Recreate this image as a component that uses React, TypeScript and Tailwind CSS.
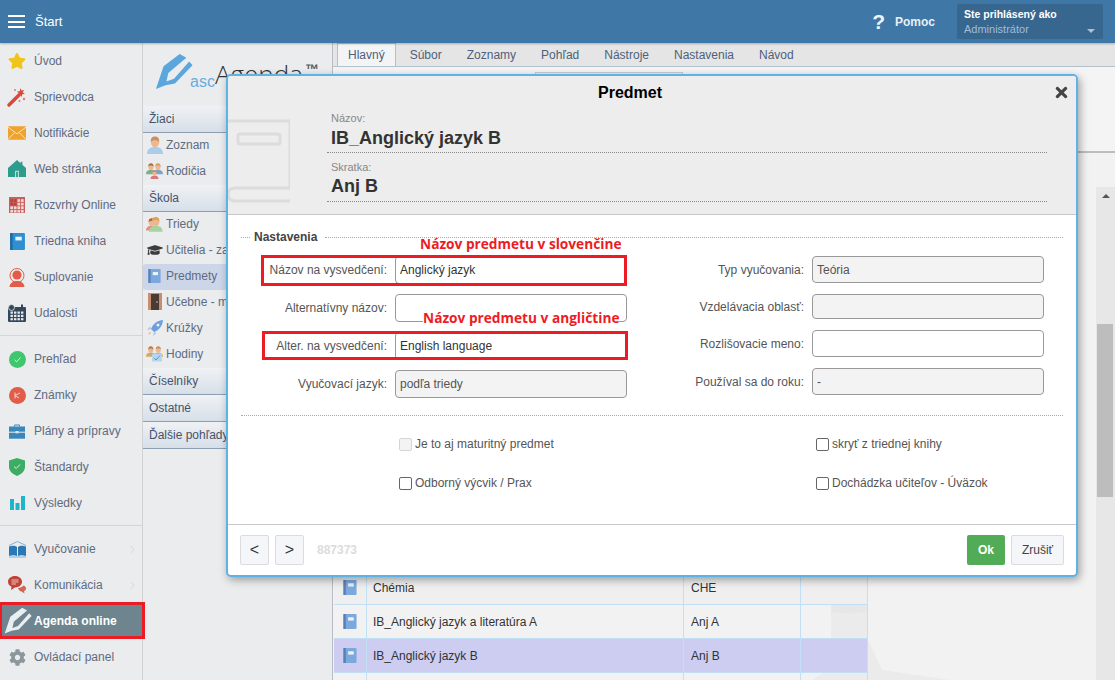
import type { ReactNode } from "react";
import { FaCog, FaGraduationCap, FaStar, FaTimes } from "react-icons/fa";
import { ChevronRight } from "lucide-react";

const Wand = () => (
  <svg width="20" height="20" viewBox="0 0 20 20">
    <path d="M2 18 L12 8" stroke="#d9483b" strokeWidth="3.4" strokeLinecap="round" />
    <path d="M13.5 1 l.9 2.6 2.6-.6-1.2 2.4 2.2 1.5-2.8.4-.5 2.7-1.7-2.2-2.6.8 1.3-2.4-1.8-1.9 2.7.2z" fill="#d9483b" />
    <circle cx="17" cy="12" r="1.2" fill="#e8766a" />
    <circle cx="12.5" cy="14" r="1" fill="#e8766a" />
    <circle cx="8" cy="3" r="1" fill="#e8766a" />
  </svg>
);

const Mail = () => (
  <svg width="18" height="14" viewBox="0 0 20 15">
    <rect width="20" height="15" fill="#f0a22e" />
    <path d="M0 1 L10 8.5 L20 1 M0 14.5 L7.5 7 M20 14.5 L12.5 7" stroke="#fbe3b8" strokeWidth="1.1" fill="none" />
  </svg>
);

const House = () => (
  <svg width="18" height="18" viewBox="0 0 20 20">
    <path d="M0 9 L10 0 L14 3.5 V2 H16 V5.3 L20 9 V19 H0Z" fill="#2c9c8c" />
    <rect x="8" y="12" width="4" height="7" fill="#d8efeb" />
    <rect x="9" y="13" width="2" height="6" fill="#2c9c8c" />
  </svg>
);

const RedCalendar = () => (
  <svg width="16" height="16" viewBox="0 0 18 18">
    <rect width="18" height="18" fill="#c7605c" />
    {[0, 1, 2, 3].map((r) =>
      [0, 1, 2, 3].map((c) => (
        <rect key={`${r}-${c}`} x={1.5 + c * 4} y={2.5 + r * 4} width="3" height="3" fill={c < 2 && r < 2 ? "#b8413c" : "#f2d6d4"} />
      ))
    )}
  </svg>
);

const BlueBook = ({ w = 14, h = 16, fill = "#2f8fd0", dark = "#1f6ea8" }: { w?: number; h?: number; fill?: string; dark?: string }) => (
  <svg width={w} height={h} viewBox="0 0 14 16">
    <rect width="14" height="16" rx="1" fill={fill} />
    <rect width="2.5" height="16" fill={dark} />
    <rect x="5" y="3.500" width="6" height="3.500" fill="#eaf3fa" />
  </svg>
);

const PersonCircle = () => (
  <svg width="18" height="19" viewBox="0 0 18 19">
    <circle cx="9" cy="7.5" r="7" fill="none" stroke="#e25c4a" strokeWidth="1" />
    <circle cx="9" cy="7" r="4.6" fill="#e25c4a" />
    <path d="M1.5 19 C2 14 6 13 9 13 C12 13 16 14 16.5 19Z" fill="#e25c4a" />
  </svg>
);

const DarkCalendar = () => (
  <svg width="18" height="18" viewBox="0 0 18 18">
    <rect y="3" width="18" height="15" rx="1" fill="#35475b" />
    <circle cx="3.5" cy="3.5" r="3" fill="#35475b" stroke="#eceded" strokeWidth=".8" />
    <rect x="13" y="0.5" width="2" height="4" fill="#35475b" />
    {[0, 1, 2].map((r) =>
      [0, 1, 2, 3].map((c) => (
        <rect key={`${r}-${c}`} x={2.5 + c * 3.5} y={7.5 + r * 3.3} width="2.4" height="2.2" fill="#e8ecf0" />
      ))
    )}
  </svg>
);

const CheckCircle = () => (
  <svg width="17" height="17" viewBox="0 0 17 17">
    <circle cx="8.5" cy="8.5" r="8.5" fill="#3ec76e" />
    <path d="M5.5 8.8 L7.6 10.8 L11.5 6.5" stroke="#d9f5e3" strokeWidth="1" fill="none" />
  </svg>
);

const GradeCircle = () => (
  <svg width="17" height="17" viewBox="0 0 17 17">
    <circle cx="8.5" cy="8.5" r="8.5" fill="#e25c4a" />
    <path d="M6 5.5 V11.5 M6 8.5 L11 6 M6 8.5 L10 11" stroke="#f8d5d0" strokeWidth="1" fill="none" />
  </svg>
);

const Briefcase = () => (
  <svg width="16" height="15" viewBox="0 0 16 15">
    <path d="M5.5 2.5 V1 H10.5 V2.5" stroke="#3a87bb" strokeWidth="1" fill="none" />
    <rect y="2.5" width="16" height="5.2" fill="#3a87bb" />
    <rect y="8.7" width="16" height="6" fill="#3a87bb" />
    <rect x="6.5" y="7" width="3" height="2.4" fill="#d5e6f1" />
  </svg>
);

const Shield = () => (
  <svg width="16" height="18" viewBox="0 0 16 18">
    <path d="M8 0 L16 2.5 V9 C16 13.5 11.5 16.5 8 18 C4.500 16.5 0 13.500 0 9 V2.500Z" fill="#3cad63" />
    <path d="M5 8.500 L7.200 10.500 L11 6.500" stroke="#d9f1e1" strokeWidth="1" fill="none" />
  </svg>
);

const Bars = () => (
  <svg width="15" height="14" viewBox="0 0 15 14">
    <rect y="3" width="4" height="11" fill="#1fb5c9" />
    <rect x="5.500" y="7" width="4" height="7" fill="#1fb5c9" />
    <rect x="11" width="4" height="14" fill="#1fb5c9" />
  </svg>
);

const OpenBook = () => (
  <svg width="19" height="17" viewBox="0 0 19 17">
    <path d="M1 4.500 L9.500 .5 L18 4.500" stroke="#7fb0d3" strokeWidth="1" fill="none" />
    <path d="M1 5.500 C4 4.500 7 4.500 9 6 V15 C7 14 4 14 1 15Z" fill="#2a79b5" />
    <path d="M18 5.500 C15 4.500 12 4.500 10 6 V15 C12 14 15 14 18 15Z" fill="#2a79b5" />
    <path d="M1 16 H18" stroke="#7fb0d3" strokeWidth="1" />
  </svg>
);

const Chat = () => (
  <svg width="18" height="18" viewBox="0 0 18 18">
    <path d="M7 0 C11 0 14 2.500 14 5.800 C14 9 11 11.500 7 11.500 L3 14 L3.500 10.700 C1.300 9.700 0 8 0 5.800 C0 2.500 3 0 7 0Z" fill="#bf4436" />
    <path d="M3.500 4 H10.500 M3.500 6 H10.500 M3.500 8 H8" stroke="#f2d4d0" strokeWidth=".9" />
    <path d="M10 12 C12 12 14.500 11 15.500 9.500 C17 10 18 11.200 18 12.500 C18 13.800 17 14.700 16 15.100 L16.500 17.500 L13.500 15.500 C12 15.500 10.700 14 10 12Z" fill="#cf6457" />
  </svg>
);

const Pencil = ({ color, size }: { color: string; size: number }) => (
  <svg width={size} height={size} viewBox="0 0 40 40">
    <path d="M1 38 L9 14 L26 1 L33 5 L14 21 L12 30 L20 27 L36 9 L39.500 13 L21 32 L11 34Z" fill={color} />
  </svg>
);

// head + shoulders, drawn around a 16x18 box
const Person = ({ x = 0, y = 0, s = 1, skin = "#ecb892", hair = "#c98f66", body }: { x?: number; y?: number; s?: number; skin?: string; hair?: string; body: string }) => (
  <g transform={`translate(${x} ${y}) scale(${s})`}>
    <path d="M0 18 C0 12.500 4 11 8 11 C12 11 16 12.500 16 18Z" fill={body} />
    <ellipse cx="8" cy="6" rx="4.200" ry="5.300" fill={skin} />
    <path d="M3.800 6 C3.500 1.500 6 .5 8 .5 C10 .5 12.500 1.500 12.200 6 C11 3.500 5 3.500 3.800 6Z" fill={hair} />
  </g>
);

const Zoznam = () => (
  <svg width="16" height="18" viewBox="0 0 16 18">
    <Person body="#a9cdea" />
  </svg>
);

const Rodicia = () => (
  <svg width="17" height="16" viewBox="0 0 17 16">
    <Person s={0.62} x={0} y={0} body="#7fae8c" hair="#a0714f" />
    <Person s={0.62} x={7} y={0} body="#7fa2cc" hair="#d2a056" />
    <Person s={0.5} x={4.500} y={7} body="#d9787a" />
  </svg>
);

const Triedy = () => (
  <svg width="17" height="16" viewBox="0 0 17 16">
    <Person s={0.7} x={0} y={2} body="#e58a86" hair="#c4603f" />
    <Person s={0.85} x={3} y={0.500} body="#a6d3a0" hair="#d9a35f" />
  </svg>
);

const Hodiny = () => (
  <svg width="17" height="16" viewBox="0 0 17 16">
    <Person s={0.6} x={0} y={0} body="#d9a860" hair="#b07b45" />
    <Person s={0.6} x={7.500} y={0} body="#e0b070" hair="#c98f66" />
    <rect x="6" y="8" width="10" height="7.500" fill="#b4d6ee" />
    <path d="M8 12 L10 14 L14 9.500" stroke="#5b98c9" fill="none" />
  </svg>
);

const Door = () => (
  <svg width="14" height="17" viewBox="0 0 14 17">
    <rect width="14" height="17" fill="#c58e72" />
    <rect x="3" y="1" width="8" height="16" fill="#4b3a32" />
    <circle cx="9" cy="9" r=".8" fill="#e6c8a8" />
  </svg>
);

const Rocket = () => (
  <svg width="16" height="16" viewBox="0 0 16 16">
    <path d="M16 0 C10 .5 6 4 4 9 L7 12 C12 10 15.500 6 16 0Z" fill="#6f9fdc" />
    <path d="M4 9 L0 10 L3 6.500Z M7 12 L6 16 L9.500 13Z" fill="#a9c4ea" />
    <circle cx="11" cy="5" r="1.500" fill="#e8f0fb" />
    <path d="M3 12 L1 15 L4 13Z" fill="#e9a56a" />
  </svg>
);

const navTop: { label: string; icon: ReactNode }[] = [
  { label: "Úvod", icon: <FaStar className="text-[18px] text-[#efc41b]" /> },
  { label: "Sprievodca", icon: <Wand /> },
  { label: "Notifikácie", icon: <Mail /> },
  { label: "Web stránka", icon: <House /> },
  { label: "Rozvrhy Online", icon: <RedCalendar /> },
  { label: "Triedna kniha", icon: <BlueBook w={15} h={17} /> },
  { label: "Suplovanie", icon: <PersonCircle /> },
  { label: "Udalosti", icon: <DarkCalendar /> },
];

const navMid: { label: string; icon: ReactNode }[] = [
  { label: "Prehľad", icon: <CheckCircle /> },
  { label: "Známky", icon: <GradeCircle /> },
  { label: "Plány a prípravy", icon: <Briefcase /> },
  { label: "Štandardy", icon: <Shield /> },
  { label: "Výsledky", icon: <Bars /> },
];

const NavItem = ({ label, icon, arrow }: { label: string; icon: ReactNode; arrow?: boolean }) => (
  <div className="flex h-[36px] items-center text-[12px] text-[#5f6b80]">
    <span className="flex w-[34px] shrink-0 justify-center">{icon}</span>
    <span className="truncate">{label}</span>
    {arrow && <ChevronRight size={13} strokeWidth={1.2} className="ml-auto mr-[3px] text-[#c6cacd]" />}
  </div>
);

const Sidebar = () => (
  <aside className="flex w-[143px] shrink-0 flex-col border-r border-[#cfd1d3] bg-[#ebecee]">
    <div className="border-b border-[#d3d5d7] pb-[4px]">
      {navTop.map((n) => (
        <NavItem key={n.label} {...n} />
      ))}
    </div>
    <div className="border-b border-[#d3d5d7] pb-[4px] pt-[5px]">
      {navMid.map((n) => (
        <NavItem key={n.label} {...n} />
      ))}
    </div>
    <div className="pt-[5px]">
      <NavItem label="Vyučovanie" icon={<OpenBook />} arrow />
      <NavItem label="Komunikácia" icon={<Chat />} arrow />
      <div className="relative flex h-[36px] items-center bg-[#6e8590] text-[12px] font-bold text-white">
        <span className="flex w-[34px] shrink-0 justify-center pl-[2px]">
          <Pencil color="#e9eef0" size={28} />
        </span>
        Agenda online
        <span className="absolute -right-[3px] -top-[1px] h-[37px] w-[146px] border-[3px] border-[#ed1c24]" />
      </div>
      <NavItem label="Ovládací panel" icon={<FaCog className="text-[17px] text-[#8b979b]" />} />
    </div>
  </aside>
);

const GroupHeader = ({ children }: { children: ReactNode }) => (
  <div className="flex h-[27px] items-center whitespace-nowrap border-b border-[#8f9db0] bg-gradient-to-b from-[#f0f2f4] to-[#d6dfe9] pl-[6px] text-[12px] text-[#47536a]">
    {children}
  </div>
);

const SubItem = ({ label, icon, active }: { label: string; icon: ReactNode; active?: boolean }) => (
  <div className={`flex h-[26px] items-center whitespace-nowrap pb-[3px] text-[12px] text-[#5f6b80] ${active ? "rounded-l-[3px] bg-[#cdd6e8]" : ""}`}>
    <span className="flex w-[23px] shrink-0 justify-center">{icon}</span>
    {label}
  </div>
);

const SecondColumn = () => (
  <section className="flex w-[190px] shrink-0 flex-col overflow-hidden border-r border-[#b9bcc0] bg-[#ebecee]">
    <div className="flex h-[63px] items-start pl-[12px] pt-[10px]">
      <Pencil color="#5ba6dc" size={38} />
      <span className="-ml-[3px] mt-[19px] text-[16px] leading-[20px] text-[#69addf]">asc</span>
      <span className="mt-[1.500px] font-['Open_Sans',sans-serif] text-[26px] font-light leading-[38px] text-[#333]">Agenda</span>
      <span className="ml-[2px] mt-[11px] text-[14px] font-bold leading-[10px] text-[#555]">™</span>
    </div>
    <GroupHeader>Žiaci</GroupHeader>
    <SubItem label="Zoznam" icon={<Zoznam />} />
    <SubItem label="Rodičia" icon={<Rodicia />} />
    <GroupHeader>Škola</GroupHeader>
    <SubItem label="Triedy" icon={<Triedy />} />
    <SubItem label="Učitelia - zamestnanci" icon={<FaGraduationCap className="text-[16px] text-[#3c3c3c]" />} />
    <SubItem label="Predmety" active icon={<BlueBook w={13} h={14} fill="#7ca9dd" dark="#5a7fb8" />} />
    <SubItem label="Učebne - miestnosti" icon={<Door />} />
    <SubItem label="Krúžky" icon={<Rocket />} />
    <SubItem label="Hodiny" icon={<Hodiny />} />
    <GroupHeader>Číselníky</GroupHeader>
    <GroupHeader>Ostatné</GroupHeader>
    <GroupHeader>Ďalšie pohľady</GroupHeader>
  </section>
);

const tabs = ["Hlavný", "Súbor", "Zoznamy", "Pohľad", "Nástroje", "Nastavenia", "Návod"];

const subjects = [
  { name: "Chémia", code: "CHE", bg: "bg-[#efefef]" },
  { name: "IB_Anglický jazyk a literatúra A", code: "Anj A", bg: "" },
  { name: "IB_Anglický jazyk B", code: "Anj B", bg: "bg-[#cccdf0]" },
  { name: "", code: "", bg: "" },
];

const Main = () => (
  <main className="relative flex min-w-0 flex-1 flex-col bg-[#f2f2f2]">
    <div className="flex h-[24px] items-end border-b border-[#b4c0cc] bg-[#e5e5e5] pl-[4px] text-[12px] text-[#4f5f7c]">
      {tabs.map((t, i) => (
        <span
          key={t}
          className={
            i === 0
              ? "flex h-[23px] items-center border border-b-0 border-[#b4c0cc] bg-[#f2f4f6] px-[10px]"
              : "flex h-[23px] items-center pl-[14px] pr-[11px]"
          }
        >
          {t}
        </span>
      ))}
    </div>
    <div className="flex h-[86px] shrink-0 items-start border-b-2 border-[#bdbdbd] bg-[#f4f4f4] pt-[5px]">
      <div className="ml-[202px] h-[20px] w-[148px] border border-[#c9c9c9] bg-[#eeeeee]" />
    </div>
    {/* flask watermark behind the table */}
    <svg width="140" height="80" viewBox="0 0 140 80" className="absolute left-[479px] top-[557px]">
      <path d="M19 4 H56 V40 L70 70 L138 80 H0 L13 72 L19 60Z" fill="#ebebeb" />
      <path d="M19 5 C19 1 56 1 56 5 V11 C56 14 19 14 19 11Z" fill="#e7e7e7" />
    </svg>
    <div className="relative flex min-h-0 flex-1">
      <div className="ml-px mt-[418px] w-[534px] shrink-0">
        {subjects.map((s) => (
          <div key={s.code + s.name} className={`grid h-[34px] grid-cols-[33px_317px_117px_67px] border-b border-[#c2e0f5] text-[12px] text-[#333] ${s.bg}`}>
            <span className="flex items-center justify-center border-r border-[#c2e0f5]">
              {s.name && <BlueBook w={14} h={15} fill="#7ca9dd" dark="#5a7fb8" />}
            </span>
            <span className="flex items-center border-r border-[#c2e0f5] pl-[6px]">{s.name}</span>
            <span className="flex items-center border-r border-[#c2e0f5] pl-[7px]">{s.code}</span>
            <span className="border-r border-[#c2e0f5]" />
          </div>
        ))}
      </div>
      <div className="ml-auto mt-[34px] flex w-[19px] shrink-0 flex-col bg-[#e7e7e7] pl-px">
        <span className="mx-auto mt-[7px] h-0 w-0 border-x-[4px] border-b-[4px] border-x-transparent border-b-[#555]" />
        <span className="mt-[126px] h-[173px] w-[16px] bg-[#bdbdbd]" />
      </div>
    </div>
  </main>
);

const Field = ({
  label,
  value,
  disabled,
  height = "h-[28px]",
  children,
}: {
  label: string;
  value?: string;
  disabled?: boolean;
  height?: string;
  children?: ReactNode;
}) => (
  <div className={`relative flex items-center ${height}`}>
    <span className="w-[146px] shrink-0 whitespace-nowrap text-right text-[12px] text-[#555]">{label}</span>
    <span
      className={`ml-[8px] flex h-full w-[232px] items-center rounded-[4px] border border-[#999] pl-[4px] text-[12px] text-[#333] ${
        disabled ? "bg-[#f3f3f3] text-[#555]" : "bg-white"
      }`}
    >
      {value}
    </span>
    {children}
  </div>
);

const Check = ({ label, disabled }: { label: string; disabled?: boolean }) => (
  <label className="flex h-[13px] items-center gap-[3px] whitespace-nowrap text-[12px] text-[#555]">
    <span className={`h-[13px] w-[13px] rounded-[2px] border ${disabled ? "border-[#d5d5d5] bg-[#f3f3f3]" : "border-[#666] bg-white"}`} />
    <span className="pb-[2px]">{label}</span>
  </label>
);

const Dialog = () => (
  <div className="absolute left-[226px] top-[74px] flex h-[503px] w-[852px] flex-col overflow-hidden rounded-[5px] border-2 border-[#5cb3e6] bg-white shadow-[2px_3px_8px_rgba(0,0,0,0.35)]">
    <div className="relative h-[139px] shrink-0 border-b border-[#c8c8c8] bg-[#ededed]">
      <h2 className="pr-[44px] pt-[8px] text-center text-[16px] font-bold leading-[18px] text-black">Predmet</h2>
      <FaTimes className="absolute right-[6px] top-[8px] text-[17px] text-[#444]" />
      <svg width="62" height="84" viewBox="0 0 62 84" className="absolute left-0 top-[43px]" fill="none" stroke="#dcdcdc" strokeWidth="3">
        <path d="M0 2 H62 V69 H8 C2 69 0 72 0 75 C0 80 3 82 8 82 H62" />
        <rect x="10" y="15" width="42" height="10" rx="2" />
      </svg>
      <div className="absolute left-[99px] top-[36px] w-[720px]">
        <div className="border-b border-dotted border-[#888] pb-[1px] pl-[4px]">
          <div className="text-[11px] leading-[13px] text-[#888]">Názov:</div>
          <div className="text-[18px] font-bold leading-[26px] text-[#333]">IB_Anglický jazyk B</div>
        </div>
        <div className="mt-[8px] border-b border-dotted border-[#888] pb-[2px] pl-[4px]">
          <div className="text-[11px] leading-[13px] text-[#888]">Skratka:</div>
          <div className="text-[18px] font-bold leading-[25px] text-[#333]">Anj B</div>
        </div>
      </div>
    </div>

    <div className="flex-1 px-[13px] pt-[15px]">
      <div className="flex items-center">
        <span className="w-[9px] border-t border-dotted border-[#aaa]" />
        <span className="px-[4px] text-[12px] font-bold leading-[14px] text-[#444]">Nastavenia</span>
        <span className="ml-[4px] flex-1 border-t border-dotted border-[#aaa]" />
      </div>
      <div className="mt-[12px] flex gap-[31px] border-b border-dotted border-[#aaa] pb-[17px]">
        <div className="flex flex-col gap-[10px]">
          <Field label="Názov na vysvedčení:" value="Anglický jazyk">
            <span className="absolute -top-[1px] left-[20px] right-0 h-[31px] border-[3px] border-[#ed1c24]" />
            <span className="absolute -top-[20px] left-[179px] whitespace-nowrap font-['Open_Sans',sans-serif] text-[13.700px] font-bold leading-[16px] text-[#ed1c24]">
              Názov predmetu v slovenčine
            </span>
          </Field>
          <Field label="Alternatívny názov:">
            <span className="absolute left-[182px] top-[16px] whitespace-nowrap bg-white font-['Open_Sans',sans-serif] text-[13.700px] font-bold leading-[16px] text-[#ed1c24]">
              Názov predmetu v angličtine
            </span>
          </Field>
          <Field label="Alter. na vysvedčení:" value="English language">
            <span className="absolute -right-[1px] -top-[1px] left-[21px] h-[29px] border-[3px] border-[#ed1c24]" />
          </Field>
          <Field label="Vyučovací jazyk:" value="podľa triedy" disabled />
        </div>
        <div className="flex flex-col gap-[11px]">
          <Field label="Typ vyučovania:" value="Teória" disabled height="h-[27px]" />
          <Field label="Vzdelávacia oblasť:" disabled height="h-[25px]" />
          <Field label="Rozlišovacie meno:" height="h-[27px]" />
          <Field label="Používal sa do roku:" value="-" disabled height="h-[27px]" />
        </div>
      </div>
      <div className="mt-[22px] grid grid-cols-[417px_auto] gap-y-[26px] pl-[158px]">
        <Check label="Je to aj maturitný predmet" disabled />
        <Check label="skryť z triednej knihy" />
        <Check label="Odborný výcvik / Prax" />
        <Check label="Dochádzka učiteľov - Úväzok" />
      </div>
    </div>

    <div className="flex h-[51px] shrink-0 items-center border-t border-[#c8c8c8] px-[12px]">
      <button className="h-[30px] w-[29px] rounded-[2px] border border-[#dcdcdc] bg-[#f5f6fa] text-[16px] text-[#333]">&lt;</button>
      <button className="ml-[6px] h-[30px] w-[29px] rounded-[2px] border border-[#dcdcdc] bg-[#f5f6fa] text-[16px] text-[#333]">&gt;</button>
      <span className="ml-[13px] text-[12px] font-bold text-[#dcdcdc]">887373</span>
      <button className="ml-auto h-[30px] w-[38px] rounded-[2px] bg-[#52ac57] text-[12px] font-bold text-white">Ok</button>
      <button className="ml-[6px] h-[30px] w-[53px] rounded-[2px] border border-[#dcdcdc] bg-[#f5f6fa] text-[12px] text-[#444]">Zrušiť</button>
    </div>
  </div>
);

export default function App() {
  return (
    <div className="relative flex h-[680px] w-[1115px] flex-col overflow-hidden bg-[#ebecee] font-['Liberation_Sans',Arial,sans-serif]">
      <header className="z-10 flex h-[43px] shrink-0 items-center bg-[#3f78a6] shadow-[0_1px_2px_rgba(0,0,0,0.25)]">
        <div className="ml-[8px] flex w-[17px] flex-col gap-[3.500px]">
          <span className="h-[2px] bg-white" />
          <span className="h-[2px] bg-white" />
          <span className="h-[2px] bg-white" />
        </div>
        <span className="ml-[10px] text-[13px] text-white">Štart</span>
        <span className="ml-auto text-[21px] font-bold text-[#edf3f8]">?</span>
        <span className="ml-[10px] text-[12px] font-bold text-[#e7eff6]">Pomoc</span>
        <div className="relative ml-[22px] mr-[12px] h-[35px] w-[146px] rounded-[2px] bg-[#37668e] pl-[7px] pt-[4px]">
          <div className="text-[10.500px] font-bold leading-[13px] text-white">Ste prihlásený ako</div>
          <div className="text-[11px] leading-[16px] text-[#9fbddb]">Administrátor</div>
          <span className="absolute right-[8px] top-[25px] h-0 w-0 border-x-[4px] border-t-[4px] border-x-transparent border-t-[#a9c2d8]" />
        </div>
      </header>
      <div className="flex min-h-0 flex-1">
        <Sidebar />
        <SecondColumn />
        <Main />
      </div>
      <Dialog />
    </div>
  );
}
